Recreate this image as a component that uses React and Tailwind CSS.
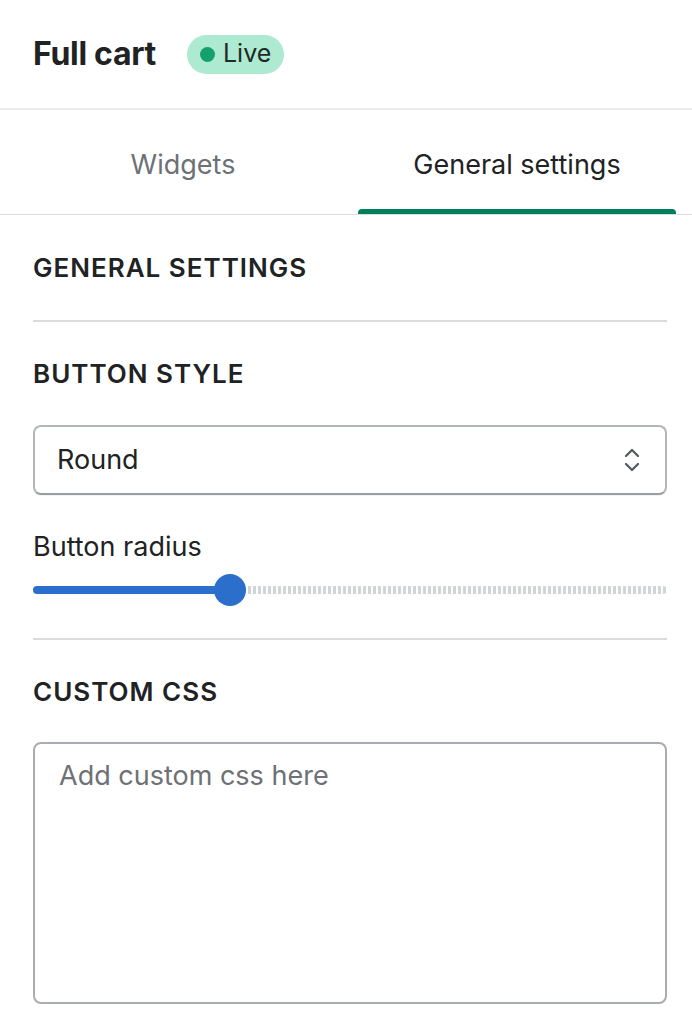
import React, { useState } from "react";

const font = { fontFamily: "Inter, 'Noto Sans', sans-serif" };

function SectionTitle({ children, className = "" }) {
  return (
    <h2 className={"text-[26px] leading-[32px] font-semibold uppercase tracking-[1px] text-[#202223] " + className}>
      {children}
    </h2>
  );
}

export default function App() {
  const [tab, setTab] = useState("general");
  const [style, setStyle] = useState("Round");
  const [radius] = useState(31);

  return (
    <div className="w-[692px] min-h-[1036px] bg-white text-[#202223]" style={font}>
      {/* Header */}
      <div className="h-[110px] flex items-center gap-[31px] px-[33px] border-b-2 border-[#ebecee]">
        <h1 className="text-[32px] font-bold tracking-[-0.3px]">Full cart</h1>
        <span className="flex items-center gap-[8px] h-[39px] px-[13px] rounded-full bg-[#aeead2] text-[25px] text-[#1e2a25]">
          <span className="w-[15px] h-[15px] rounded-full bg-[#16a06f]" />
          Live
        </span>
      </div>

      {/* Tabs */}
      <div className="flex gap-4 pl-6 pr-4 h-[105px] border-b border-[#d9dbdd]">
        {[
          { id: "widgets", label: "Widgets" },
          { id: "general", label: "General settings" },
        ].map((t) => (
          <button
            key={t.id}
            onClick={() => setTab(t.id)}
            className={
              "flex-1 flex flex-col justify-end text-[27px] " +
              (tab === t.id ? "text-[#202223]" : "text-[#6d7175]")
            }
          >
            <span className="flex-1 flex items-center justify-center pt-[11px]">{t.label}</span>
            <span
              className={
                "h-[5px] w-full rounded-t-[4px] " + (tab === t.id ? "bg-[#007f5f]" : "bg-transparent")
              }
            />
          </button>
        ))}
      </div>

      {/* Content */}
      <div className="pl-[33px] pr-[25px] pt-[37px] pb-8">
        <SectionTitle>General settings</SectionTitle>
        <div className="mt-[36px] border-t-2 border-[#d9dbdd]" />

        <SectionTitle className="mt-[36px]">Button style</SectionTitle>
        <div className="relative mt-[35px]">
          <select
            value={style}
            onChange={(e) => setStyle(e.target.value)}
            className="appearance-none w-full h-[70px] rounded-[8px] border-2 border-[#b3b6b9] border-b-[#9a9da1] bg-white pl-[22px] pr-12 text-[27px] text-[#202223] shadow-[0_1px_0_rgba(0,0,0,0.05)] outline-none"
          >
            <option>Round</option>
            <option>Square</option>
            <option>Pill</option>
          </select>
          <svg
            className="absolute right-[27px] top-1/2 -translate-y-1/2 pointer-events-none"
            width="16"
            height="26"
            viewBox="0 0 16 26"
            fill="none"
            stroke="#5c5f62"
            strokeWidth="2.4"
            strokeLinecap="round"
            strokeLinejoin="round"
          >
            <path d="M2 9l6-6 6 6" />
            <path d="M2 17l6 6 6-6" />
          </svg>
        </div>

        <div className="mt-[36px] text-[27px] leading-[32px] text-[#202223]">Button radius</div>
        <div className="mt-[11px] h-8 flex items-center">
          <div className="h-[8px] rounded-l-full bg-[#2c6ecb]" style={{ width: `${radius}%` }} />
          <div className="w-[32px] h-[32px] -ml-[16px] rounded-full bg-[#2c6ecb] shrink-0" />
          <div className="flex-1 ml-[2px] h-[8px] rounded-r-full bg-[repeating-linear-gradient(90deg,#d2d5d8_0_3px,transparent_3px_5px)]" />
        </div>

        <div className="mt-[32px] border-t-2 border-[#d9dbdd]" />

        <SectionTitle className="mt-[36px]">Custom CSS</SectionTitle>
        <textarea
          placeholder="Add custom css here"
          className="mt-[34px] block w-full h-[262px] resize-none rounded-[8px] border-2 border-[#a9acb0] px-[24px] py-[14px] text-[27px] leading-[36px] text-[#202223] placeholder:text-[#6d7175] outline-none"
        />
      </div>
    </div>
  );
}
